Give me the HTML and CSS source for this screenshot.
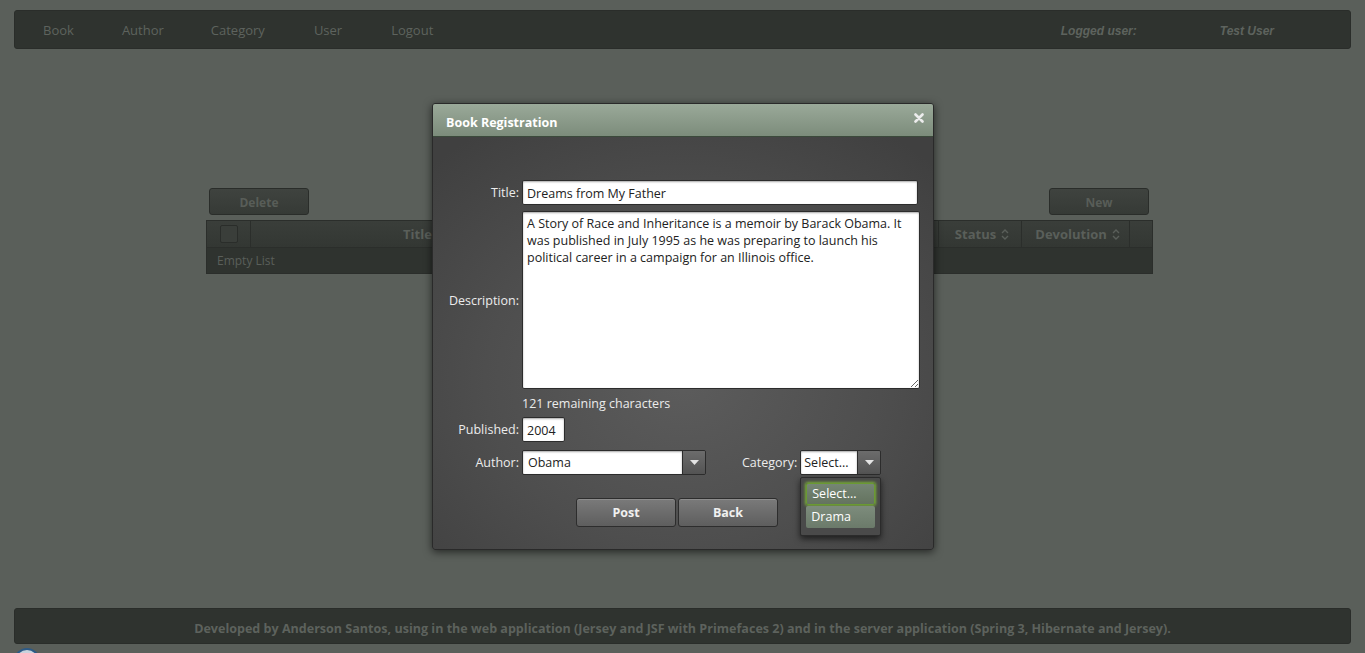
FILE: index.html
```html
<!DOCTYPE html>
<html>
<head>
<meta charset="utf-8">
<link rel="stylesheet" href="styles.css">
</head>
<body>
<div class="page">
  <nav class="topbar">
    <div class="menu">
      <span class="mi mi-book">Book</span>
      <span class="mi mi-author">Author</span>
      <span class="mi mi-category">Category</span>
      <span class="mi mi-user">User</span>
      <span class="mi mi-logout">Logout</span>
    </div>
    <div class="logged">
      <span class="lu-label">Logged user:</span>
      <span class="lu-name">Test User</span>
    </div>
  </nav>

  <main class="content">
    <div class="toolbar">
      <button class="bg-btn">Delete</button>
      <button class="bg-btn">New</button>
    </div>
    <div class="table">
      <div class="thead">
        <div class="th th-check"><span class="cb"></span></div>
        <div class="th th-title">Title</div>
        <div class="th th-hidden">Author</div>
        <div class="th th-status">Status <svg class="sort" width="8" height="11" viewBox="0 0 8 11"><path d="M1 4 L4 1 L7 4 M1 7 L4 10 L7 7" fill="none" stroke="#5a5f5a" stroke-width="1.4"/></svg></div>
        <div class="th th-dev">Devolution <svg class="sort" width="8" height="11" viewBox="0 0 8 11"><path d="M1 4 L4 1 L7 4 M1 7 L4 10 L7 7" fill="none" stroke="#5a5f5a" stroke-width="1.4"/></svg></div>
        <div class="th th-last"></div>
      </div>
      <div class="trow">Empty List</div>
    </div>
  </main>

  <footer class="footer">Developed by Anderson Santos, using in the web application (Jersey and JSF with Primefaces 2) and in the server application (Spring 3, Hibernate and Jersey).</footer>
  <div class="corner-icon"></div>
</div>

<div class="dialog">
  <div class="dlg-head">
    <span class="dlg-title">Book Registration</span>
    <svg class="dlg-close" width="10" height="10" viewBox="0 0 10 10"><path d="M1.5 1.5 L8.5 8.5 M8.5 1.5 L1.5 8.5" stroke="#ececec" stroke-width="2.6" stroke-linecap="round"/></svg>
  </div>
  <div class="dlg-body">
    <div class="row row-title">
      <label class="lbl">Title:</label>
      <input class="inp inp-title" type="text" value="Dreams from My Father">
    </div>
    <div class="row row-desc">
      <label class="lbl">Description:</label>
      <textarea class="inp ta">A Story of Race and Inheritance is a memoir by Barack Obama. It was published in July 1995 as he was preparing to launch his political career in a campaign for an Illinois office.</textarea>
    </div>
    <div class="remaining">121 remaining characters</div>
    <div class="row row-pub">
      <label class="lbl">Published:</label>
      <input class="inp inp-pub" type="text" value="2004">
    </div>
    <div class="row row-author">
      <label class="lbl">Author:</label>
      <div class="sel sel-author">
        <span class="sel-val">Obama</span>
        <span class="sel-btn"><svg width="9" height="5" viewBox="0 0 9 5"><path d="M0 0 H9 L4.5 5 Z" fill="#e4e4e4"/></svg></span>
      </div>
      <label class="lbl lbl-cat">Category:</label>
      <div class="cat-wrap">
        <div class="sel sel-cat">
          <span class="sel-val">Select...</span>
          <span class="sel-btn"><svg width="9" height="5" viewBox="0 0 9 5"><path d="M0 0 H9 L4.5 5 Z" fill="#e4e4e4"/></svg></span>
        </div>
        <div class="dropdown">
          <div class="opt opt-active">Select...</div>
          <div class="opt">Drama</div>
        </div>
      </div>
    </div>
    <div class="actions">
      <button class="btn">Post</button>
      <button class="btn">Back</button>
    </div>
  </div>
</div>
</body>
</html>
```

FILE: styles.css
```css
* { box-sizing: border-box; }
html, body { margin: 0; padding: 0; }
body {
  background: #5a5f5a;
  font-family: "Open Sans", "Noto Sans", sans-serif;
  width: 1365px;
  height: 653px;
  overflow: hidden;
}
.page {
  height: 653px;
  display: flex;
  flex-direction: column;
  padding: 10px 14px 0 14px;
  position: relative;
}
.topbar {
  height: 39px;
  background: #2f332f;
  border: 1px solid #2a2d2a;
  border-radius: 3px;
  display: flex;
  align-items: center;
  justify-content: space-between;
  padding: 2px 0 0 28px;
  flex: none;
}
.menu { display: flex; align-items: center; }
.mi {
  color: #5e635e;
  font-size: 13px;
  line-height: 1;
}
.mi-book { margin-right: 48px; }
.mi-author { margin-right: 47px; }
.mi-category { margin-right: 49px; }
.mi-user { margin-right: 49px; }
.logged {
  font-family: "Liberation Sans", Arial, sans-serif;
  font-weight: bold;
  font-style: italic;
  font-size: 12px;
  color: #5e635e;
  display: flex;
  padding-right: 76px;
}
.lu-label { margin-right: 83px; }

.content {
  flex: 1;
  padding-top: 139px;
  padding-left: 192px;
}
.toolbar {
  width: 947px;
  display: flex;
  justify-content: space-between;
  padding: 0 4px 0 3px;
}
.bg-btn {
  width: 100px;
  height: 27px;
  background: linear-gradient(#3f433f, #363a36);
  border: 1px solid #2a2d2a;
  border-radius: 3px;
  color: #585d58;
  font-family: "Open Sans", sans-serif;
  font-weight: bold;
  font-size: 12px;
  padding: 2px 0 0 0;
}
.table {
  margin-top: 5px;
  width: 947px;
  border: 1px solid #2b2e2b;
}
.thead {
  display: flex;
  height: 27px;
  background: linear-gradient(#3a3e3a, #333733);
  border-bottom: 1px solid #2b2e2b;
}
.th {
  border-right: 1px solid #2b2e2b;
  color: #5a5f5a;
  font-weight: bold;
  font-size: 13px;
  display: flex;
  align-items: center;
  justify-content: center;
}
.th-check { width: 44px; }
.cb {
  width: 18px;
  height: 18px;
  border: 1px solid #2a2d2a;
  border-radius: 2px;
  background: #3a3e3a;
}
.th-title { width: 334px; }
.th-hidden { flex: 1; }
.th-status { width: 83px; padding-left: 4px; }
.th-dev { width: 108px; padding-left: 4px; }
.th-last { width: 22px; border-right: none; }
.sort { margin-left: 5px; }
.trow {
  height: 25px;
  background: #2f332f;
  color: #5a5f5a;
  font-size: 12px;
  line-height: 25px;
  padding-left: 10px;
}

.footer {
  flex: none;
  height: 36px;
  margin-bottom: 9px;
  background: #2f332f;
  border: 1px solid #2a2d2a;
  border-radius: 3px;
  color: #5d625d;
  font-weight: bold;
  font-size: 12.55px;
  display: flex;
  align-items: center;
  justify-content: center;
  padding-top: 5px;
}
.corner-icon {
  position: absolute;
  left: 14px;
  top: 648px;
  width: 26px;
  height: 26px;
  border-radius: 50%;
  border: 2px solid #2d5a86;
  background: #c9d3dd;
}

/* dialog */
.dialog {
  position: absolute;
  left: 432px;
  top: 103px;
  width: 502px;
  height: 447px;
  border: 1px solid #2a2a2a;
  border-radius: 3px;
  box-shadow: 0 2px 8px rgba(0,0,0,0.6);
  overflow: hidden;
  display: flex;
  flex-direction: column;
  background: radial-gradient(ellipse 360px 300px at 50% 62%, #5c5c5c 0%, #4e4e4e 55%, #404040 100%);
}
.dlg-head {
  height: 33px;
  background: linear-gradient(#9aa999, #7c8c7b);
  border-bottom: 1px solid #3b4a3b;
  display: flex;
  align-items: center;
  justify-content: space-between;
  padding: 0 9px 0 13px;
  flex: none;
}
.dlg-title {
  color: #fff;
  font-weight: bold;
  font-size: 12.5px;
  margin-top: 4px;
}
.dlg-close { margin-top: -5px; }
.dlg-body {
  padding: 43px 0 0 0;
  color: #e8e8e8;
  font-size: 12.5px;
}
.row { display: flex; align-items: center; }
.lbl {
  width: 89px;
  text-align: right;
  padding-right: 3px;
  color: #ececec;
  font-size: 12.5px;
}
.inp {
  background: #fff;
  border: 1px solid #2c2c2c;
  border-radius: 2px;
  box-shadow: inset 0 1px 2px rgba(0,0,0,0.35);
  color: #222;
  font-family: "Open Sans", sans-serif;
  font-size: 12.5px;
  padding: 1px 4px 0 4px;
  outline: none;
}
.inp-title { width: 396px; height: 25px; }
.row-desc { margin-top: 6px; }
.ta {
  width: 398px;
  height: 178px;
  padding: 3px 4px;
  line-height: 17px;
  resize: both;
}
.remaining {
  margin: 7px 0 0 89px;
  font-size: 12.5px;
  color: #ececec;
  line-height: 16px;
}
.row-pub { margin-top: 5px; }
.inp-pub { width: 43px; height: 25px; }
.row-author { margin-top: 8px; }
.sel {
  display: flex;
  height: 25px;
  border: 1px solid #2c2c2c;
  border-radius: 2px;
  overflow: hidden;
}
.sel-val {
  flex: 1;
  background: #fff;
  color: #222;
  font-size: 12.5px;
  line-height: 24px;
  padding-left: 5px;
  box-shadow: inset 0 1px 2px rgba(0,0,0,0.35);
}
.sel-btn {
  width: 23px;
  background: linear-gradient(#6c6c6c, #535353);
  border-left: 1px solid #2c2c2c;
  display: flex;
  align-items: center;
  justify-content: center;
}
.sel-author { width: 184px; }
.lbl-cat { width: auto; margin-left: 36px; padding-right: 3px; }
.cat-wrap { position: relative; }
.sel-cat { width: 81px; }
.sel-cat .sel-val { padding-left: 3px; }
.dropdown {
  position: absolute;
  left: 0;
  top: 27px;
  width: 81px;
  padding: 5px 5px 6px 5px;
  background: #4a4a4a;
  border: 1px solid #2b2b2b;
  border-radius: 2px;
  box-shadow: 0 3px 6px rgba(0,0,0,0.6);
  z-index: 2;
}
.opt {
  height: 22px;
  line-height: 22px;
  padding-left: 5px;
  color: #fff;
  font-size: 12.5px;
  background: linear-gradient(#7d8c7c, #6b7a6a);
  border-radius: 2px;
  margin-bottom: 1px;
}
.opt-active {
  background: linear-gradient(#758574, #64735f);
  box-shadow: 0 0 3px 1px #7bae3c;
  border: 1px solid #6a9a32;
  line-height: 20px;
}
.actions {
  display: flex;
  justify-content: center;
  gap: 2px;
  margin-top: 23px;
  padding-right: 12px;
}
.btn {
  width: 100px;
  height: 29px;
  background: linear-gradient(#7a7a7a, #5e5e5e);
  border: 1px solid #2d2d2d;
  border-radius: 3px;
  color: #f0f0f0;
  font-family: "Open Sans", sans-serif;
  font-weight: bold;
  font-size: 12.5px;
  padding: 0;
  box-shadow: inset 0 1px 0 rgba(255,255,255,0.15);
}
```
